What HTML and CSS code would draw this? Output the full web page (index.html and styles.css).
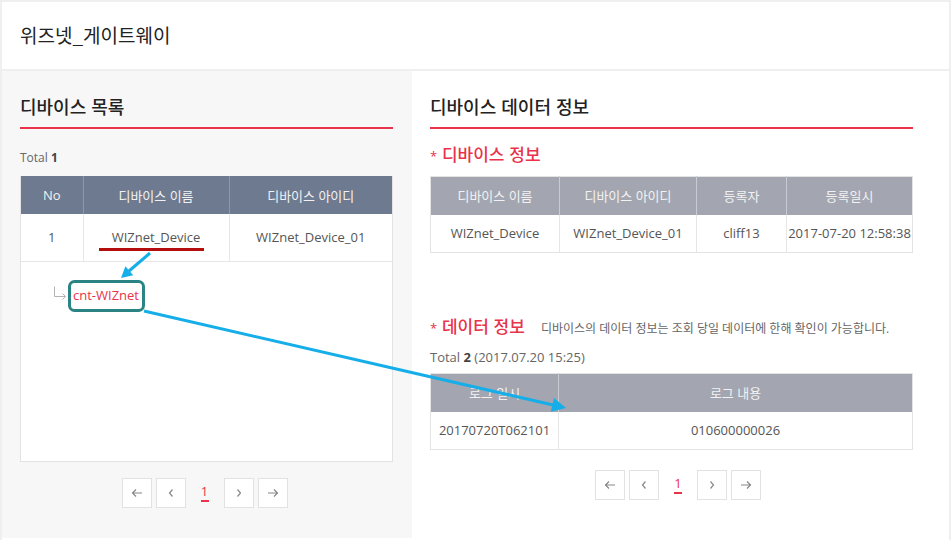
FILE: index.html
```html
<!DOCTYPE html>
<html lang="ko">
<head>
<meta charset="utf-8">
<title>위즈넷_게이트웨이</title>
<link rel="stylesheet" href="styles.css">
</head>
<body>
<div class="page">
  <header class="top">
    <h1 class="title">위즈넷_게이트웨이</h1>
  </header>
  <main class="main">
    <section class="panel panel-left">
      <h2 class="sec-title">디바이스 목록</h2>
      <p class="total">Total <b>1</b></p>
      <div class="list-box">
        <table class="tbl tbl-dark">
          <colgroup><col class="c-no"><col class="c-name"><col></colgroup>
          <thead><tr><th>No</th><th>디바이스 이름</th><th>디바이스 아이디</th></tr></thead>
          <tbody><tr><td>1</td><td>WIZnet_Device</td><td>WIZnet_Device_01</td></tr></tbody>
        </table>
        <div class="tree">
          <div class="tree-item">
            <svg class="tree-icon" width="14" height="14" viewBox="0 0 14 14"><path d="M1.5 0.5V10.5H12.5M9.5 7.5L12.5 10.5L9.5 13.5" fill="none" stroke="#b4b4b4" stroke-width="1"/></svg>
            <span class="tree-label">cnt-WIZnet</span>
          </div>
        </div>
      </div>
      <nav class="pager">
        <span class="pg"><svg width="12" height="10" viewBox="0 0 12 10"><path d="M11 5H1.5M5 1.5L1.5 5L5 8.5" fill="none" stroke="#888" stroke-width="1.2"/></svg></span>
        <span class="pg"><svg width="8" height="10" viewBox="0 0 8 10"><path d="M5.5 1.5L2.5 5L5.5 8.5" fill="none" stroke="#888" stroke-width="1.2"/></svg></span>
        <span class="pg-num">1</span>
        <span class="pg"><svg width="8" height="10" viewBox="0 0 8 10"><path d="M2.5 1.5L5.5 5L2.5 8.5" fill="none" stroke="#888" stroke-width="1.2"/></svg></span>
        <span class="pg"><svg width="12" height="10" viewBox="0 0 12 10"><path d="M1 5H10.5M7 1.5L10.5 5L7 8.5" fill="none" stroke="#888" stroke-width="1.2"/></svg></span>
      </nav>
    </section>
    <section class="panel panel-right">
      <h2 class="sec-title">디바이스 데이터 정보</h2>
      <h3 class="sub-title"><span class="star">*</span> 디바이스 정보</h3>
      <table class="tbl tbl-grey">
        <colgroup><col class="c-a"><col class="c-b"><col class="c-c"><col></colgroup>
        <thead><tr><th>디바이스 이름</th><th>디바이스 아이디</th><th>등록자</th><th>등록일시</th></tr></thead>
        <tbody><tr><td>WIZnet_Device</td><td>WIZnet_Device_01</td><td>cliff13</td><td>2017-07-20 12:58:38</td></tr></tbody>
      </table>
      <div class="sub-row">
        <h3 class="sub-title"><span class="star">*</span> 데이터 정보</h3>
        <span class="desc">디바이스의 데이터 정보는 조회 당일 데이터에 한해 확인이 가능합니다.</span>
      </div>
      <p class="total total-2">Total <b>2</b> (2017.07.20 15:25)</p>
      <table class="tbl tbl-grey">
        <colgroup><col class="c-log"><col></colgroup>
        <thead><tr><th>로그 일시</th><th>로그 내용</th></tr></thead>
        <tbody><tr><td>20170720T062101</td><td>010600000026</td></tr></tbody>
      </table>
      <nav class="pager pager-right">
        <span class="pg"><svg width="12" height="10" viewBox="0 0 12 10"><path d="M11 5H1.5M5 1.5L1.5 5L5 8.5" fill="none" stroke="#888" stroke-width="1.2"/></svg></span>
        <span class="pg"><svg width="8" height="10" viewBox="0 0 8 10"><path d="M5.5 1.5L2.5 5L5.5 8.5" fill="none" stroke="#888" stroke-width="1.2"/></svg></span>
        <span class="pg-num">1</span>
        <span class="pg"><svg width="8" height="10" viewBox="0 0 8 10"><path d="M2.5 1.5L5.5 5L2.5 8.5" fill="none" stroke="#888" stroke-width="1.2"/></svg></span>
        <span class="pg"><svg width="12" height="10" viewBox="0 0 12 10"><path d="M1 5H10.5M7 1.5L10.5 5L7 8.5" fill="none" stroke="#888" stroke-width="1.2"/></svg></span>
      </nav>
    </section>
  </main>
  <svg class="overlay" width="952" height="540" viewBox="0 0 952 540">
    <line x1="99" y1="249.5" x2="204" y2="249.5" stroke="#b30d0d" stroke-width="3"/>
    <rect x="69.5" y="281.5" width="74" height="29" rx="5" ry="5" fill="none" stroke="#2b8484" stroke-width="3"/>
    <line x1="150" y1="253" x2="129" y2="271" stroke="#16aee8" stroke-width="3"/>
    <polygon points="121,278 125.4,266.3 133.2,275.3" fill="#16aee8"/>
    <line x1="144" y1="311" x2="553" y2="405" stroke="#16aee8" stroke-width="3"/>
    <polygon points="566,408 550.8,411.7 554,398.1" fill="#16aee8"/>
  </svg>
</div>
</body>
</html>
```
FILE: styles.css
```css
* { box-sizing: border-box; }
html, body { margin: 0; padding: 0; background: #fff; }
body {
  font-family: "Open Sans", "Noto Sans CJK KR", sans-serif;
  color: #333;
}
.page {
  position: relative;
  width: 951px;
  height: 540px;
  border: 2px solid #efefef;
  border-bottom: none;
  overflow: hidden;
}
.top {
  height: 69px;
  border-bottom: 2px solid #efefef;
  display: flex;
  align-items: center;
  padding-left: 18px;
}
.title {
  margin: 0;
  font-family: "Noto Sans CJK KR", sans-serif;
  font-size: 19px;
  font-weight: 400;
  color: #222;
  line-height: 26px;
  padding-bottom: 2px;
}
.main {
  display: flex;
  height: 467px;
}
.panel { padding-top: 22px; }
.panel-left {
  width: 410px;
  background: #f7f7f7;
  padding-left: 18px;
  padding-right: 19px;
}
.panel-right {
  flex: 1;
  background: #fff;
  padding-left: 18px;
  padding-right: 36px;
}
.sec-title {
  margin: 0;
  font-family: "Noto Sans CJK KR", sans-serif;
  font-size: 18px;
  font-weight: 500;
  color: #222;
  line-height: 26px;
  padding-bottom: 8px;
  border-bottom: 2px solid #e8334a;
}
.total {
  margin: 20px 0 9px;
  font-size: 12px;
  line-height: 18px;
  color: #666;
}
.total b { font-weight: 700; color: #444; }
.list-box {
  background: #fff;
  border: 1px solid #e3e3e3;
  border-top: none;
}
.tbl {
  width: 100%;
  border-collapse: collapse;
  table-layout: fixed;
  font-size: 13px;
}
.tbl th {
  font-weight: 400;
  color: #f2f2f2;
  height: 38px;
  text-align: center;
  padding: 0;
}
.tbl td {
  color: #555;
  text-align: center;
  padding: 0;
  background: #fff;
}
.tbl-dark th { background: #6e7a8f; border-left: 1px solid #8e98aa; }
.tbl-dark th:first-child { border-left: none; }
.tbl-dark td { height: 47px; border-left: 1px solid #e6e6e6; border-bottom: 1px solid #e6e6e6; }
.tbl-dark td:first-child { border-left: none; }
.c-no { width: 62px; }
.c-name { width: 146px; }
.tree {
  height: 199px;
  padding: 23px 0 0 32px;
}
.tree-item {
  display: flex;
  align-items: center;
  gap: 6px;
  height: 20px;
}
.tree-icon { margin-top: -4px; }
.tree-label {
  color: #e8334a;
  font-size: 13px;
  line-height: 20px;
}
.pager {
  display: flex;
  justify-content: center;
  gap: 4px;
  margin-top: 16px;
  padding-right: 4px;
}
.pg, .pg-num {
  width: 30px;
  height: 30px;
  display: flex;
  align-items: center;
  justify-content: center;
}
.pg { background: #fff; border: 1px solid #e2e2e2; }
.pg-num {
  flex-direction: column;
  color: #e8334a;
  font-size: 13px;
  line-height: 14px;
}
.pg-num::after {
  content: "";
  display: block;
  width: 8px;
  height: 2px;
  background: #e8334a;
  margin-top: 2px;
}
.sub-title {
  margin: 14px 0 9px;
  font-family: "Noto Sans CJK KR", sans-serif;
  font-size: 17px;
  font-weight: 500;
  color: #e8334a;
  line-height: 22px;
}
.star { font-size: 13px; font-family: "Open Sans", sans-serif; }
.tbl-grey { border: 1px solid #e3e3e3; }
.tbl-grey th { background: #a3a6b0; border-left: 1px solid #c9cbd2; }
.tbl-grey th:first-child { border-left: none; }
.tbl-grey td { height: 38px; border-left: 1px solid #e6e6e6; }
.tbl-grey td:first-child { border-left: none; }
.c-a { width: 129px; }
.c-b { width: 137px; }
.c-c { width: 90px; }
.c-log { width: 128px; }
.sub-row {
  display: flex;
  align-items: baseline;
  gap: 16px;
  margin-top: 62px;
}
.sub-row .sub-title { margin: 0; }
.desc { font-size: 12px; color: #666; }
.total-2 { margin: 9px 0 7px; font-size: 13px; }
.pager-right { margin-top: 20px; padding-right: 0; padding-left: 13px; }
.overlay {
  position: absolute;
  left: -2px;
  top: -2px;
  pointer-events: none;
}
```
